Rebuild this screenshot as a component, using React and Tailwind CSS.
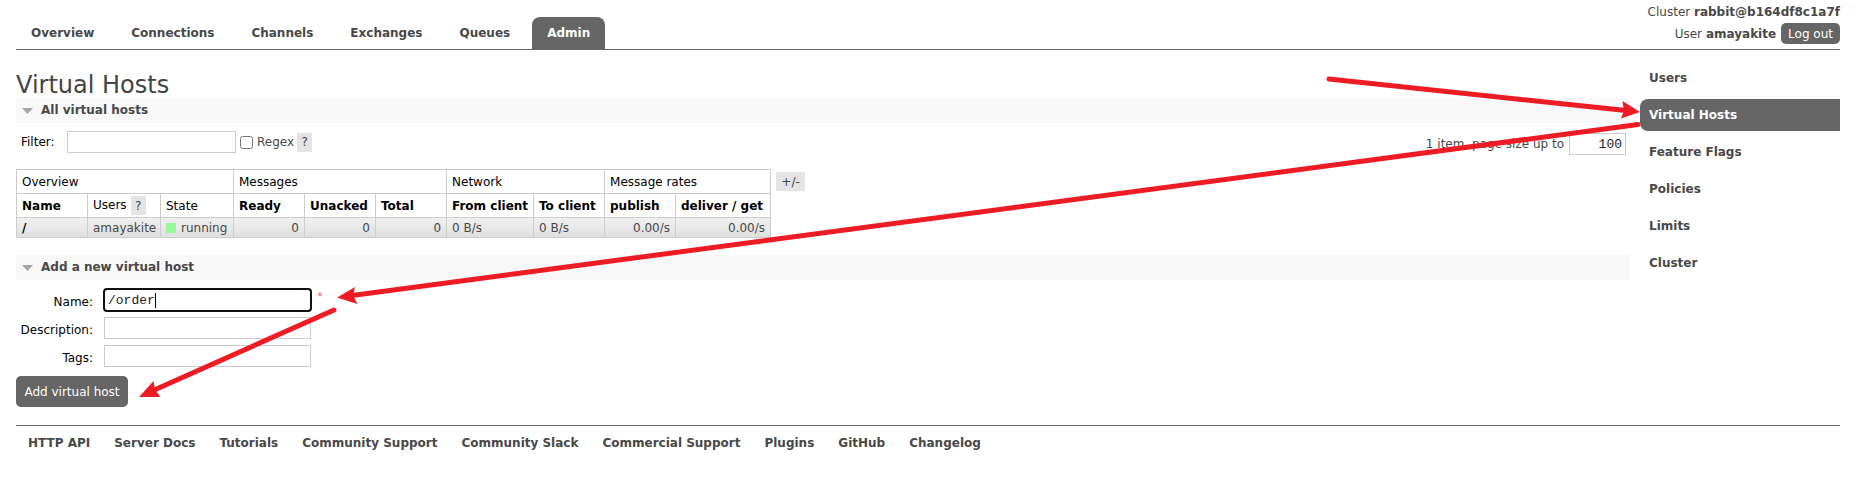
const tabs = ["Overview", "Connections", "Channels", "Exchanges", "Queues", "Admin"];
const sideLinks = ["Users", "Virtual Hosts", "Feature Flags", "Policies", "Limits", "Cluster"];
const footerLinks = [
  "HTTP API",
  "Server Docs",
  "Tutorials",
  "Community Support",
  "Community Slack",
  "Commercial Support",
  "Plugins",
  "GitHub",
  "Changelog",
];

function Section({ title, children }) {
  return (
    <section>
      <h2 className="bg-[#f8f8f8] text-[#484848] font-bold">
        <button type="button" className="flex h-[25px] w-full items-center gap-2 pb-px pl-1.5 text-left">
          <svg className="mt-px h-1.5 w-[11px]" viewBox="0 0 11 6" aria-hidden="true">
            <path d="M0 0h11L5.5 6z" fill="#a5a5a5" />
          </svg>
          {title}
        </button>
      </h2>
      {children}
    </section>
  );
}

function Help() {
  return (
    <button type="button" className="h-[19px] w-[15px] bg-[#e4e4e4] text-center text-[#444]">
      ?
    </button>
  );
}

function Arrows() {
  return (
    <svg className="pointer-events-none absolute top-0 left-0" width="1876" height="491" viewBox="0 0 1876 491" aria-hidden="true">
      <g stroke="#ed1c24" strokeWidth="5" strokeLinecap="round" fill="none">
        <path d="M1329 79L1626 110.500" />
        <path d="M1638 124.500L352 295.500" />
        <path d="M334 310L152 391" />
      </g>
      <g fill="#ed1c24">
        <path d="M1640 112L1621 118.500L1624 111L1622.500 101z" />
        <path d="M337 297.500L355 287L353 295.500L357.500 304z" />
        <path d="M139 397L153.500 381L155 389.500L160.500 397z" />
      </g>
    </svg>
  );
}

const head = "border border-[#ccc] px-[5px] text-left text-black";
const cell = "border border-[#ccc] px-[5px]";
const textInput = "h-[22px] border border-[#ccc] bg-white px-[3px] font-['Liberation_Mono',monospace] text-[13px] text-[#222]";

export default function App() {
  return (
    <div className="relative bg-white pr-9 pl-4 font-['DejaVu_Sans',Verdana,sans-serif] text-[12px] leading-[18px] text-[#484848]">
      <header className="flex h-[50px] items-end justify-between border-b border-[#666]">
        <nav className="flex gap-[7px] font-bold">
          {tabs.map((t) => (
            <a
              key={t}
              href="#"
              className={
                t === "Admin"
                  ? "flex h-8 items-center rounded-t-lg bg-[#666] px-[15px] text-white"
                  : "flex h-8 items-center px-[15px]"
              }
            >
              {t}
            </a>
          ))}
        </nav>
        <div className="flex flex-col items-end gap-0.5 self-start pt-[3px]">
          <div>
            Cluster <b>rabbit@b164df8c1a7f</b>
          </div>
          <div className="flex items-center gap-[5px]">
            <span>
              User <b>amayakite</b>
            </span>
            <button type="button" className="h-[21px] rounded-[5px] bg-[#666] px-[7px] text-white">
              Log out
            </button>
          </div>
        </div>
      </header>

      <div className="flex gap-2.5">
        <main className="min-w-0 flex-1 pt-[22px]">
          <h1 className="text-[24px] leading-[26px] text-[#444]">Virtual Hosts</h1>
          <Section title="All virtual hosts">
            <div className="flex justify-between pt-2 pr-1 pl-[5px]">
              <div className="flex h-[22px] items-center">
                <label htmlFor="filter" className="w-[46px] text-black">
                  Filter:
                </label>
                <input id="filter" className={textInput + " mr-1 w-[169px]"} />
                <input id="regex" type="checkbox" className="mr-1 size-[13px]" />
                <label htmlFor="regex" className="mr-[3px]">
                  Regex
                </label>
                <Help />
              </div>
              <div className="flex items-center gap-[5px] pt-0.5">
                <label htmlFor="size">1 item, page size up to</label>
                <input id="size" defaultValue="100" className={textInput + " w-[57px] text-right"} />
              </div>
            </div>
            <div className="flex items-start gap-[5px] pt-3.5">
              <table className="w-[755px] table-fixed border-collapse">
                <colgroup>
                  <col className="w-[71px]" />
                  <col className="w-[73px]" />
                  <col className="w-[73px]" />
                  <col className="w-[71px]" />
                  <col className="w-[71px]" />
                  <col className="w-[71px]" />
                  <col className="w-[87px]" />
                  <col className="w-[71px]" />
                  <col className="w-[71px]" />
                  <col className="w-[95px]" />
                </colgroup>
                <thead>
                  <tr className="h-6">
                    <th colSpan={3} className={head + " font-normal"}>Overview</th>
                    <th colSpan={3} className={head + " font-normal"}>Messages</th>
                    <th colSpan={2} className={head + " font-normal"}>Network</th>
                    <th colSpan={2} className={head + " font-normal"}>Message rates</th>
                  </tr>
                  <tr className="h-6 whitespace-nowrap">
                    <th className={head}>Name</th>
                    <th className={head + " font-normal"}>
                      <span className="flex gap-1">
                        Users <Help />
                      </span>
                    </th>
                    <th className={head + " font-normal"}>State</th>
                    <th className={head}>Ready</th>
                    <th className={head}>Unacked</th>
                    <th className={head}>Total</th>
                    <th className={head}>From client</th>
                    <th className={head}>To client</th>
                    <th className={head}>publish</th>
                    <th className={head}>deliver / get</th>
                  </tr>
                </thead>
                <tbody>
                  <tr className="h-5 bg-linear-to-b from-[#f0f0f0] to-[#dfdfdf] whitespace-nowrap">
                    <td className={cell}>
                      <a href="#" className="font-bold text-black">/</a>
                    </td>
                    <td className={cell}>amayakite</td>
                    <td className={cell}>
                      <span className="flex items-center gap-[5px]">
                        <span className="size-2.5 bg-[#98f898]" />
                        running
                      </span>
                    </td>
                    <td className={cell + " text-right"}>0</td>
                    <td className={cell + " text-right"}>0</td>
                    <td className={cell + " text-right"}>0</td>
                    <td className={cell}>0 B/s</td>
                    <td className={cell}>0 B/s</td>
                    <td className={cell + " text-right"}>0.00/s</td>
                    <td className={cell + " text-right"}>0.00/s</td>
                  </tr>
                </tbody>
              </table>
              <button type="button" className="mt-[3px] h-[19px] w-[29px] bg-[#e4e4e4] text-center text-[#444]">
                +/-
              </button>
            </div>
          </Section>
          <div className="pt-[17px]">
            <Section title="Add a new virtual host">
              <form className="pt-[9px]">
                <div className="grid grid-cols-[77px_207px_auto] justify-start gap-x-[11px] gap-y-1.5 text-black">
                  <label htmlFor="name" className="pt-1 text-right">Name:</label>
                  <div className="relative">
                    <input
                      id="name"
                      defaultValue="/order"
                      className={textInput + " w-full rounded-[3px] outline-2 -outline-offset-1 outline-[#101010]"}
                    />
                    <span className="absolute top-1 left-[51px] h-[15px] w-px bg-black" />
                  </div>
                  <span className="-ml-1.5 font-['Liberation_Mono',monospace] text-[13px] text-[#f66]">*</span>
                  <label htmlFor="desc" className="pt-1 text-right">Description:</label>
                  <input id="desc" className={textInput} />
                  <span />
                  <label htmlFor="tags" className="pt-1 text-right">Tags:</label>
                  <input id="tags" className={textInput} />
                </div>
                <button type="submit" className="mt-[9px] h-[31px] w-28 rounded-[5px] bg-[#666] text-white">
                  Add virtual host
                </button>
              </form>
            </Section>
          </div>
        </main>
        <nav className="flex w-[200px] flex-col gap-[5px] pt-3 font-bold">
          {sideLinks.map((t) => (
            <a
              key={t}
              href="#"
              className={
                t === "Virtual Hosts"
                  ? "flex h-8 items-center rounded-l-lg bg-[#666] pl-[9px] text-white"
                  : "flex h-8 items-center pl-[9px]"
              }
            >
              {t}
            </a>
          ))}
        </nav>
      </div>

      <footer className="mt-[18px] flex gap-6 border-t border-[#666] pt-2 pl-3 font-bold">
        {footerLinks.map((t) => (
          <a key={t} href="#">
            {t}
          </a>
        ))}
      </footer>
      <Arrows />
    </div>
  );
}
